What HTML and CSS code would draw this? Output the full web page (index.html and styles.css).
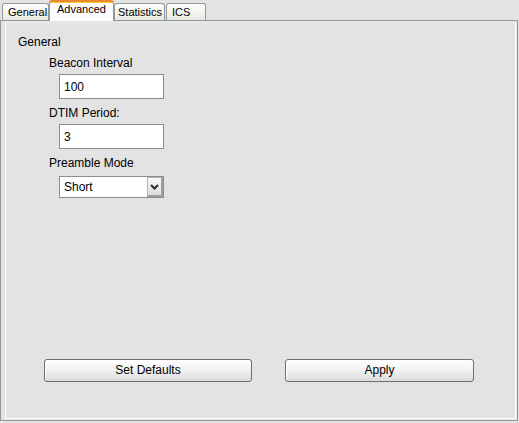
FILE: index.html
```html
<!DOCTYPE html>
<html>
<head>
<meta charset="utf-8">
<link rel="stylesheet" href="styles.css">
</head>
<body>
<div class="window">
  <div class="tabs">
    <div class="tab tab-general">General</div>
    <div class="tab tab-advanced active">Advanced</div>
    <div class="tab tab-stats">Statistics</div>
    <div class="tab tab-ics">ICS</div>
  </div>
  <div class="panel">
    <div class="frame">
      <div class="group-title">General</div>
      <div class="fields">
        <div class="label">Beacon Interval</div>
        <div class="textbox">100</div>
        <div class="label">DTIM Period:</div>
        <div class="textbox">3</div>
        <div class="label">Preamble Mode</div>
        <div class="select">
          <span class="select-value">Short</span>
          <span class="select-btn">
            <svg width="9" height="6" viewBox="0 0 9 6"><path d="M1 1 L4.5 4.5 L8 1" fill="none" stroke="#2b2b2b" stroke-width="2"/></svg>
          </span>
        </div>
      </div>
      <div class="buttons">
        <div class="btn btn-defaults">Set Defaults</div>
        <div class="btn btn-apply">Apply</div>
      </div>
    </div>
  </div>
</div>
</body>
</html>
```
FILE: styles.css
```css
html, body {
  margin: 0;
  padding: 0;
  background: #e3e3e3;
}
body {
  font-family: "Liberation Sans", Arial, sans-serif;
  font-size: 12px;
  line-height: 13px;
  color: #000;
}
.window {
  width: 519px;
  height: 423px;
}
.tabs {
  display: flex;
  align-items: flex-end;
  height: 20px;
  padding-left: 2px;
  font-size: 11px;
}
.tab {
  box-sizing: border-box;
  height: 17px;
  padding-top: 2px;
  border: 1px solid #919b9c;
  border-bottom: none;
  border-radius: 3px 3px 0 0;
  background: linear-gradient(#ffffff, #f0f0ea 70%, #e6e6e0);
  white-space: nowrap;
}
.tab-general { width: 47px; padding-left: 5px; }
.tab-advanced { width: 65px; padding-left: 7px; }
.tab-stats { width: 51px; padding-left: 3px; }
.tab-ics { width: 40px; padding-left: 5px; margin-left: 1px; }
.tab.active {
  position: relative;
  z-index: 1;
  height: 21px;
  margin-bottom: -1px;
  padding-top: 1px;
  border-top: 2px solid #e68b2c;
  box-shadow: inset 0 1px 0 #ffc83c;
  background: #fcfcfe;
}
.panel {
  box-sizing: border-box;
  width: 518px;
  height: 401px;
  border: 1px solid #919b9c;
  padding: 1px 1px 1px 4px;
  background: #e3e3e3;
}
.frame {
  box-sizing: border-box;
  height: 100%;
  border: 1px solid #ffffff;
  border-top-color: #ececec;
  display: flex;
  flex-direction: column;
}
.group-title {
  margin-top: 13px;
  padding-left: 12px;
}
.fields {
  display: flex;
  flex-direction: column;
  align-items: flex-start;
  padding-left: 43px;
}
.label {
  margin-top: 8px;
}
.textbox {
  box-sizing: border-box;
  width: 105px;
  height: 25px;
  margin-top: 4px;
  margin-left: 10px;
  padding: 6px 0 0 4px;
  border: 1px solid #8c8c8c;
  background: #fff;
}
.select {
  box-sizing: border-box;
  display: flex;
  justify-content: space-between;
  width: 105px;
  height: 22px;
  margin-top: 6px;
  margin-left: 10px;
  border: 1px solid #8c8c8c;
  background: #fff;
}
.select-value {
  padding: 4px 0 0 4px;
}
.select-btn {
  box-sizing: border-box;
  width: 16px;
  height: 20px;
  display: flex;
  align-items: center;
  justify-content: center;
  border: 1px solid #b4b4b4;
  border-right-width: 2px;
  border-bottom-width: 2px;
  border-right-color: #a0a0a0;
  border-bottom-color: #a0a0a0;
  background: linear-gradient(#fafafa, #dcdcdc);
}
.buttons {
  display: flex;
  margin-top: auto;
  margin-bottom: 36px;
  padding-left: 38px;
  gap: 33px;
}
.btn {
  box-sizing: border-box;
  height: 23px;
  padding-top: 4px;
  text-align: center;
  border: 1px solid #6e6e6e;
  border-radius: 3px;
  background: linear-gradient(#ffffff, #f3f3f3 45%, #dcdcdc);
  box-shadow: inset 1px 1px 0 #ffffff;
}
.btn-defaults { width: 208px; }
.btn-apply { width: 189px; }
```
